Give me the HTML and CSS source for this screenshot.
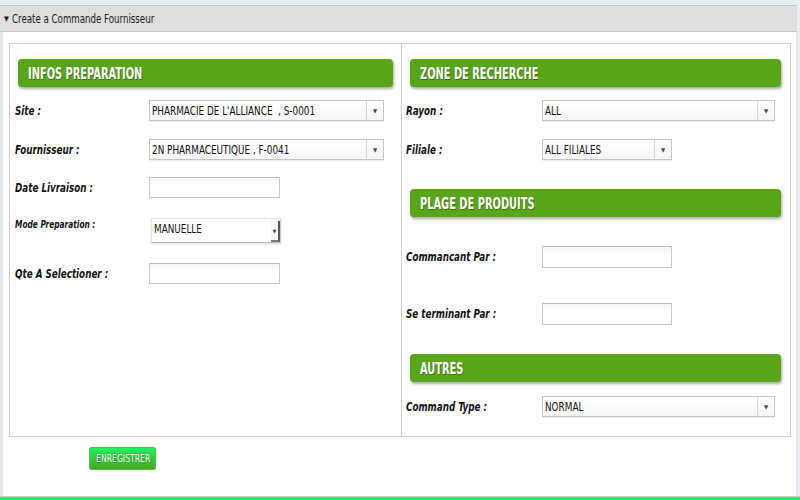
FILE: index.html
```html
<!DOCTYPE html>
<html>
<head>
<meta charset="utf-8">
<link rel="stylesheet" href="styles.css">
</head>
<body>
<div class="panel">
  <div class="hdr"><span class="tri">▼</span><span class="sx">Create a Commande Fournisseur</span></div>
  <div class="content">
    <div class="box">
      <div class="col left">
        <div class="sec"><span class="sx">INFOS PREPARATION</span></div>
        <div class="row r1"><span class="lbl"><span class="sx">Site :</span></span><div class="sel w235"><span class="val"><span class="sx">PHARMACIE DE L'ALLIANCE&nbsp; , S-0001</span></span><span class="arr">▼</span></div></div>
        <div class="row r2"><span class="lbl"><span class="sx">Fournisseur :</span></span><div class="sel w235"><span class="val"><span class="sx">2N PHARMACEUTIQUE , F-0041</span></span><span class="arr">▼</span></div></div>
        <div class="row r3"><span class="lbl"><span class="sx">Date Livraison :</span></span><input class="inp" type="text"></div>
        <div class="row r4"><span class="lbl small"><span class="sx">Mode Preparation :</span></span><div class="sel3d"><span class="val"><span class="sx">MANUELLE</span></span><span class="arr3d">▼</span></div></div>
        <div class="row r5"><span class="lbl"><span class="sx">Qte A Selectioner :</span></span><input class="inp" type="text"></div>
      </div>
      <div class="col right">
        <div class="sec"><span class="sx">ZONE DE RECHERCHE</span></div>
        <div class="row r1"><span class="lbl"><span class="sx">Rayon :</span></span><div class="sel w233"><span class="val"><span class="sx">ALL</span></span><span class="arr">▼</span></div></div>
        <div class="row r2"><span class="lbl"><span class="sx">Filiale :</span></span><div class="sel w130"><span class="val"><span class="sx">ALL FILIALES</span></span><span class="arr">▼</span></div></div>
        <div class="sec s2"><span class="sx">PLAGE DE PRODUITS</span></div>
        <div class="row q1"><span class="lbl"><span class="sx">Commancant Par :</span></span><input class="inp h21" type="text"></div>
        <div class="row q2"><span class="lbl"><span class="sx">Se terminant Par :</span></span><input class="inp h21" type="text"></div>
        <div class="sec s3"><span class="sx">AUTRES</span></div>
        <div class="row q3"><span class="lbl"><span class="sx">Command Type :</span></span><div class="sel w233"><span class="val"><span class="sx">NORMAL</span></span><span class="arr">▼</span></div></div>
      </div>
    </div>
    <button class="btn"><span class="sx">ENREGISTRER</span></button>
  </div>
  <div class="foot"></div>
</div>
</body>
</html>
```

FILE: styles.css
```css
html, body {
  margin: 0;
  padding: 0;
}
body {
  background: #e3eff0;
  width: 800px;
  height: 500px;
  overflow: hidden;
  font-family: "DejaVu Sans Condensed", "DejaVu Sans", sans-serif;
  color: #111;
}
.sx {
  display: inline-block;
  transform: scaleX(0.8);
  transform-origin: left center;
  white-space: nowrap;
}
.panel {
  margin: 5px 3px 0 0;
}
.hdr {
  height: 25px;
  background: #dedede;
  border-top: 1px solid #c6c6c6;
  border-bottom: 1px solid #c6c6c6;
  display: flex;
  align-items: center;
  font-size: 12px;
  color: #1a1a1a;
  padding-left: 4px;
}
.hdr .sx {
  transform: scaleX(0.74);
  font-size: 13px;
}
.tri {
  font-size: 7px;
  margin-right: 3px;
  margin-top: 1px;
}
.content {
  background: #fff;
  border-left: 3px solid #dfe9ea;
  border-right: 1px solid #dfe9ea;
  height: 464px;
  padding: 11px 5px 0 6px;
  box-sizing: border-box;
}
.box {
  display: flex;
  border: 1px solid #cfcfcf;
  height: 394px;
  box-sizing: border-box;
}
.col {
  display: flex;
  flex-direction: column;
}
.left {
  width: 391px;
  border-right: 1px solid #cfcfcf;
  padding: 15px 0 0 0;
}
.right {
  flex: 1;
  padding: 15px 0 0 0;
}
.sec {
  height: 28px;
  background: #59a51a;
  border-radius: 4px;
  box-shadow: 1px 2px 3px rgba(0, 0, 0, 0.35);
  color: #fff;
  font-weight: bold;
  font-size: 15px;
  display: flex;
  align-items: center;
  padding-left: 10px;
  padding-top: 1px;
  box-sizing: border-box;
  text-shadow: 1px 1px 1px rgba(0, 0, 0, 0.35);
}
.sec .sx { transform: scaleX(0.73); }
.left .sec { margin: 0 8px 0 8px; }
.right .sec { margin: 0 9px 0 8px; }
.row {
  display: flex;
  align-items: center;
}
.lbl {
  font-weight: bold;
  font-style: italic;
  font-size: 13px;
}
.lbl .sx { transform: scaleX(0.75); }
.left .lbl { width: 134px; padding-left: 5px; }
.right .lbl { width: 136px; padding-left: 4px; }
.lbl.small {
  font-size: 11px;
  align-self: flex-start;
  padding-top: 0;
}
.r1 { margin-top: 13px; height: 21px; }
.r2 { margin-top: 18px; height: 21px; }
.r3 { margin-top: 17px; height: 21px; }
.r4 { margin-top: 20px; height: 25px; }
.r5 { margin-top: 20px; height: 21px; }
.s2 { margin-top: 29px !important; }
.q1 { margin-top: 29px; height: 21px; }
.q2 { margin-top: 36px; height: 21px; }
.s3 { margin-top: 30px !important; }
.q3 { margin-top: 14px; height: 21px; }
.sel {
  display: flex;
  height: 21px;
  box-sizing: border-box;
  border: 1px solid #c4c4c4;
  background: linear-gradient(#ffffff, #f6f6f6);
  box-shadow: 0 1px 1px rgba(0, 0, 0, 0.06);
}
.w235 { width: 235px; }
.w233 { width: 233px; }
.w130 { width: 130px; }
.val {
  flex: 1;
  font-size: 12px;
  line-height: 20px;
  padding-left: 2px;
  color: #111;
  white-space: nowrap;
  overflow: hidden;
}
.val .sx { transform: scaleX(0.82); }
.arr {
  width: 16px;
  border-left: 1px solid #d4d4d4;
  font-size: 6px;
  color: #444;
  display: flex;
  align-items: center;
  justify-content: center;
}
.sel3d {
  display: flex;
  width: 130px;
  height: 25px;
  box-sizing: border-box;
  margin-left: 2px;
  border-top: 1px solid #e4e4e4;
  border-left: 1px solid #e4e4e4;
  border-bottom: 1px solid #bbbbbb;
  border-right: 1px solid #cccccc;
  background: #fff;
  box-shadow: 0 1px 2px rgba(0, 0, 0, 0.15);
}
.sel3d .val {
  line-height: 21px;
  padding-left: 2px;
}
.arr3d {
  width: 7px;
  margin: 2px 0 0 0;
  border-right: 2px solid #555;
  border-bottom: 2px solid #777;
  background: #f4f4f4;
  font-size: 5px;
  color: #333;
  display: flex;
  align-items: center;
  justify-content: center;
}
.inp {
  width: 131px;
  height: 21px;
  box-sizing: border-box;
  border: 1px solid #c8c8c8;
  border-top-color: #bcbcbc;
  background: linear-gradient(#f5f5f5, #ffffff 40%);
  padding: 0;
  margin: 0;
  outline: none;
}
.h21 { height: 22px; width: 130px; }
.btn {
  margin: 10px 0 0 80px;
  width: 67px;
  height: 23px;
  border: 1px solid #53c04a;
  border-radius: 2px;
  background: linear-gradient(#1ff25e, #49a61c);
  color: #fff;
  font-size: 11px;
  font-family: "DejaVu Sans Condensed", sans-serif;
  text-shadow: 0 0 2px rgba(0, 60, 0, 0.6);
  padding: 0 0 0 6px;
  text-align: left;
}
.btn .sx { transform: scaleX(0.78); }
.foot {
  height: 4px;
  background: #18f66f;
  border-top: 1px solid #cfcfcf;
  margin-right: -3px;
}
```
